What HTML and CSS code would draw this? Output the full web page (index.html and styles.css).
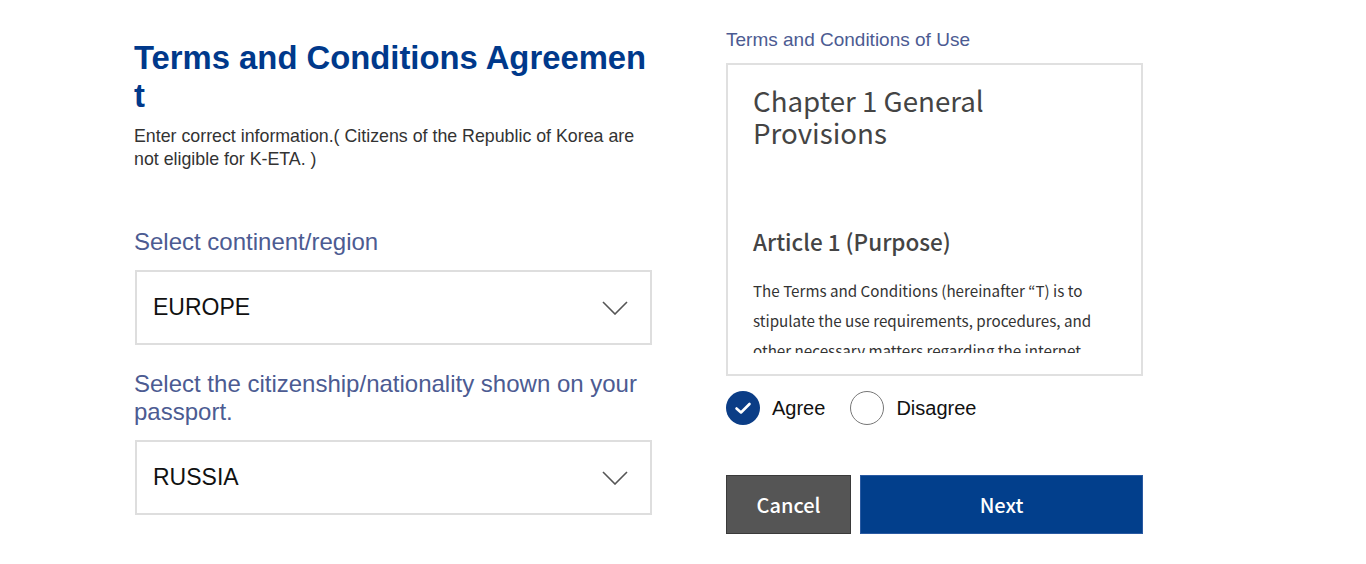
FILE: index.html
```html
<!DOCTYPE html>
<html lang="en">
<head>
<meta charset="utf-8">
<title>Terms and Conditions Agreement</title>
<link rel="stylesheet" href="styles.css">
</head>
<body>
<div class="page">
  <section class="left">
    <h1 class="title">Terms and Conditions Agreement</h1>
    <p class="subtitle">Enter correct information.( Citizens of the Republic of Korea are not eligible for K-ETA. )</p>

    <label class="field-label label-first">Select continent/region</label>
    <div class="select">
      <span class="select-value">EUROPE</span>
      <svg class="chevron" width="26" height="14" viewBox="0 0 26 14"><path d="M1 1 L13 13 L25 1" fill="none" stroke="#555" stroke-width="1.6"/></svg>
    </div>

    <label class="field-label label-second">Select the citizenship/nationality shown on your passport.</label>
    <div class="select">
      <span class="select-value">RUSSIA</span>
      <svg class="chevron" width="26" height="14" viewBox="0 0 26 14"><path d="M1 1 L13 13 L25 1" fill="none" stroke="#555" stroke-width="1.6"/></svg>
    </div>
  </section>

  <section class="right">
    <div class="terms-label">Terms and Conditions of Use</div>
    <div class="terms-box">
      <div class="terms-scroll">
        <h2 class="chapter">Chapter 1 General Provisions</h2>
        <h3 class="article">Article 1 (Purpose)</h3>
        <p class="body">The Terms and Conditions (hereinafter “T) is to stipulate the use requirements, procedures, and other necessary matters regarding the internet based electronic travel authorization service.</p>
      </div>
    </div>

    <div class="radios">
      <div class="radio">
        <span class="circle checked">
          <svg width="34" height="34" viewBox="0 0 34 34"><path d="M10.5 17.5 L15 21.5 L23.5 13" fill="none" stroke="#fff" stroke-width="2.6" stroke-linecap="round" stroke-linejoin="round"/></svg>
        </span>
        <span class="radio-text">Agree</span>
      </div>
      <div class="radio">
        <span class="circle"></span>
        <span class="radio-text">Disagree</span>
      </div>
    </div>

    <div class="buttons">
      <button class="btn btn-cancel">Cancel</button>
      <button class="btn btn-next">Next</button>
    </div>
  </section>
</div>
</body>
</html>
```

FILE: styles.css
```css
html, body {
  margin: 0;
  padding: 0;
  background: #fff;
}

body {
  font-family: "Liberation Sans", Arial, sans-serif;
}

.page {
  display: flex;
  align-items: flex-start;
  padding-left: 134px;
  gap: 72px;
}

.left {
  width: 520px;
  display: flex;
  flex-direction: column;
}

.title {
  width: 514px;
  margin: 39px 0 0 0;
  font-size: 32.8px;
  line-height: 38px;
  font-weight: 700;
  color: #00398b;
  word-break: break-all;
}

.subtitle {
  width: 512px;
  margin: 10px 0 0 0;
  font-size: 17.8px;
  line-height: 23px;
  color: #333;
}

.field-label {
  display: block;
  font-size: 24px;
  line-height: 28px;
  color: #4c5b92;
}

.label-first {
  margin-top: 57px;
}

.label-second {
  margin-top: 25px;
}

.select {
  margin-top: 14px;
  margin-left: 1px;
  width: 517px;
  height: 75px;
  box-sizing: border-box;
  border: 2px solid #dedede;
  display: flex;
  align-items: center;
  justify-content: space-between;
  padding: 0 22px 0 16px;
}

.select-value {
  font-size: 23px;
  color: #111;
}

.chevron {
  display: block;
}

.right {
  width: 417px;
  display: flex;
  flex-direction: column;
}

.terms-label {
  margin-top: 29px;
  font-size: 19px;
  line-height: 22px;
  color: #4c5b92;
}

.terms-box {
  margin-top: 12px;
  height: 313px;
  box-sizing: border-box;
  border: 2px solid #e0e0e0;
  padding-bottom: 21px;
}

.terms-scroll {
  height: 288px;
  overflow: hidden;
  padding: 19px 25px 0 25px;
  box-sizing: border-box;
  font-family: "Noto Sans CJK KR", "Noto Sans", sans-serif;
  color: #444;
}

.chapter {
  margin: 0;
  font-size: 27.7px;
  line-height: 32px;
  font-weight: 400;
  color: #444;
}

.article {
  margin: 78px 0 0 0;
  font-size: 22.5px;
  line-height: 30px;
  font-weight: 500;
  color: #444;
}

.body {
  margin: 19px 0 0 0;
  font-size: 15.2px;
  line-height: 30px;
  color: #333;
}

.radios {
  margin-top: 15px;
  display: flex;
  align-items: center;
  gap: 25px;
}

.radio {
  display: flex;
  align-items: center;
  gap: 12px;
}

.circle {
  width: 34px;
  height: 34px;
  box-sizing: border-box;
  border-radius: 50%;
  border: 1.5px solid #777;
  background: #fff;
  display: block;
}

.circle.checked {
  border: none;
  background: #0b3d86;
}

.circle svg {
  display: block;
}

.radio-text {
  font-size: 20px;
  color: #111;
}

.buttons {
  margin-top: 50px;
  display: flex;
  gap: 9px;
}

.btn {
  height: 59px;
  box-sizing: border-box;
  font-family: "Noto Sans CJK KR", "Noto Sans", sans-serif;
  font-size: 20px;
  font-weight: 500;
  color: #fff;
  cursor: pointer;
  padding: 0;
}

.btn-cancel {
  width: 125px;
  background: #555;
  border: 1px solid #3a3a3a;
}

.btn-next {
  width: 283px;
  background: #023f8c;
  border: 1px solid #2a5aa2;
}
```
